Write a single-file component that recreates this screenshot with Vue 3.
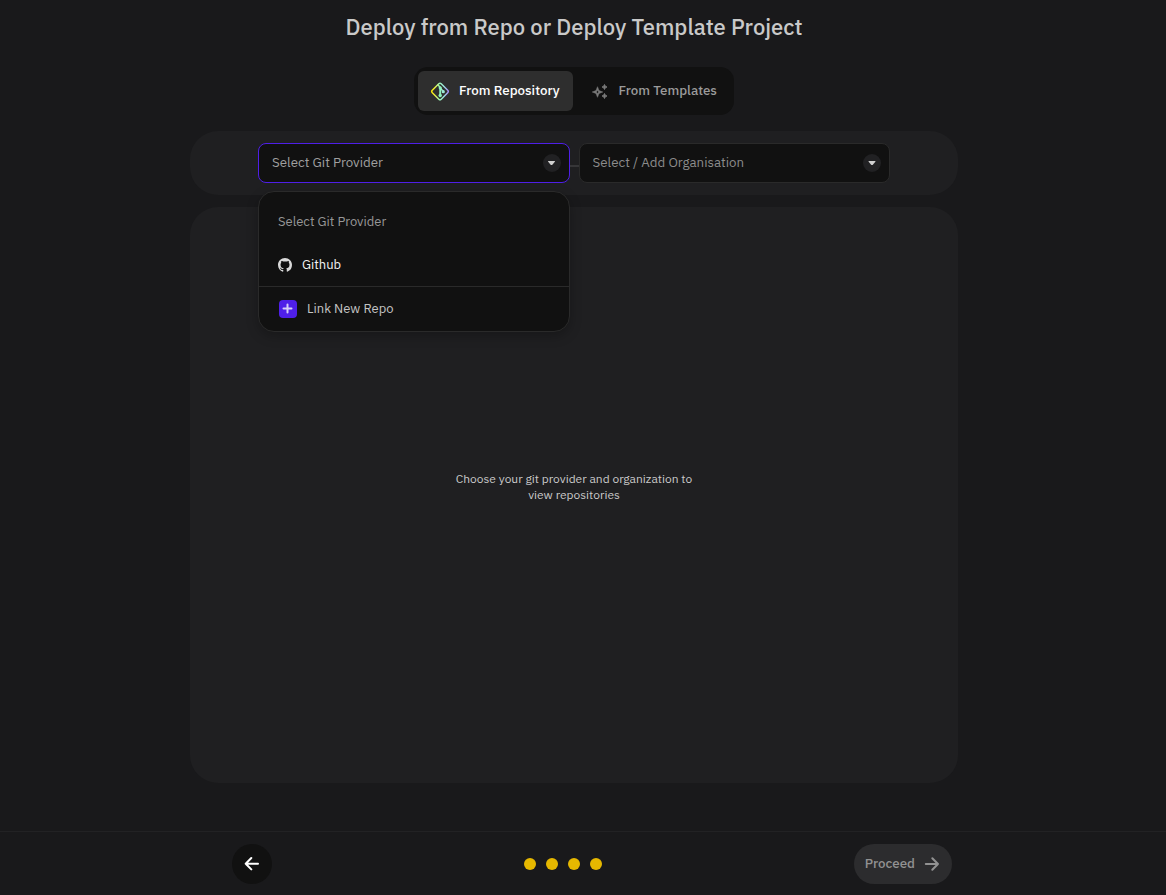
<script setup>
import { ref } from 'vue'

const source = ref('repository')
const provider = ref('')
const organisation = ref('')
const menuOpen = ref(true)
const steps = 4

function chooseProvider(name) {
  provider.value = name
  menuOpen.value = false
}
</script>

<template>
  <div class="page">
    <main class="content">
      <h1 class="title">Deploy from Repo or Deploy Template Project</h1>

      <div class="tabs" role="tablist">
        <button class="tab" :class="{ active: source === 'repository' }" type="button" role="tab" :aria-selected="source === 'repository'" @click="source = 'repository'">
          <svg class="tab-icon" width="20" height="20" viewBox="0 0 20 20" fill="none" aria-hidden="true">
            <defs>
              <linearGradient id="gitGradient" x1="1" y1="10" x2="19" y2="10" gradientUnits="userSpaceOnUse">
                <stop offset="0" stop-color="#ffe600" />
                <stop offset="0.22" stop-color="#e8ee3c" />
                <stop offset="0.45" stop-color="#9df5b4" />
                <stop offset="0.7" stop-color="#9be6dc" />
                <stop offset="1" stop-color="#a685ff" />
              </linearGradient>
            </defs>
            <g stroke="url(#gitGradient)" stroke-width="1.5" stroke-linejoin="round" stroke-linecap="round">
              <path d="M8.8 2.8 2.3 9.3a1.7 1.7 0 0 0 0 2.4l6.5 6.5a1.7 1.7 0 0 0 2.4 0l6.5-6.5a1.7 1.7 0 0 0 0-2.4l-6.5-6.5a1.7 1.7 0 0 0-2.4 0z" />
              <path d="M8 3.900 10 6M10.400 7 13 10.300" />
            </g>
            <path d="M10.200 6V14.500" stroke="#8ff3bd" stroke-width="1.900" />
            <circle cx="10.200" cy="6.800" r="1.600" fill="#8ff3bd" />
            <circle cx="10.200" cy="14.500" r="1.700" fill="#8ff3bd" />
            <circle cx="13.300" cy="10.700" r="1.600" fill="#9be9d5" />
          </svg>
          <span>From Repository</span>
        </button>
        <button class="tab" :class="{ active: source === 'templates' }" type="button" role="tab" :aria-selected="source === 'templates'" @click="source = 'templates'">
          <svg class="tab-icon" width="20" height="20" viewBox="0 0 20 20" fill="#7b7b7b" aria-hidden="true">
            <path fill-rule="evenodd" d="M7.500 5.700 9 9.500l3.800 1.500L9 12.500l-1.500 3.800L6 12.500l-3.800-1.500L6 9.500zM7.500 9.200 6.900 10.400l-1.200.6 1.200.6.6 1.200.6-1.200 1.200-.6-1.200-.6z" stroke="#7b7b7b" stroke-width=".5" />
            <path d="m14.500 3.500.8 1.700 1.700.8-1.700.8-.8 1.700-.8-1.700-1.700-.8 1.700-.8zM14.500 12.500l.8 1.700 1.700.8-1.700.8-.8 1.700-.8-1.700-1.700-.8 1.700-.8z" stroke="#7b7b7b" stroke-width=".9" />
          </svg>
          <span>From Templates</span>
        </button>
      </div>

      <section class="selectors">
        <div class="field">
          <select v-model="provider" class="select focused" aria-label="Git provider" @mousedown.prevent="menuOpen = !menuOpen">
            <option value="" disabled>Select Git Provider</option>
            <option value="github">Github</option>
          </select>
          <span class="chevron" aria-hidden="true"></span>

          <div v-if="menuOpen" class="menu">
            <p class="menu-heading">Select Git Provider</p>
            <button class="menu-item" type="button" @click="chooseProvider('github')">
              <svg width="14" height="14" viewBox="0 0 16 16" fill="#d9d9d9" aria-hidden="true">
                <path d="M8 0C3.580 0 0 3.580 0 8c0 3.540 2.290 6.530 5.470 7.590.4.070.55-.17.55-.38 0-.19-.01-.82-.01-1.490-2.010.37-2.530-.49-2.690-.94-.09-.23-.48-.94-.82-1.130-.28-.15-.68-.52-.01-.53.63-.01 1.080.58 1.230.82.72 1.210 1.870.87 2.330.66.070-.52.28-.87.51-1.070-1.780-.2-3.640-.89-3.640-3.950 0-.87.31-1.590.82-2.150-.08-.2-.36-1.020.08-2.120 0 0 .67-.21 2.200.82.64-.18 1.320-.27 2-.27s1.360.09 2 .27c1.530-1.040 2.200-.82 2.200-.82.44 1.100.16 1.920.08 2.120.51.56.82 1.270.82 2.150 0 3.070-1.870 3.750-3.650 3.950.29.25.54.73.54 1.480 0 1.070-.01 1.930-.01 2.200 0 .21.15.46.55.38A8.010 8.010 0 0 0 16 8c0-4.420-3.580-8-8-8z" />
              </svg>
              <span>Github</span>
            </button>
            <button class="menu-item link-new" type="button">
              <span class="plus">
                <svg width="18" height="18" viewBox="0 0 18 18" stroke="#d6cdf8" stroke-width="2" stroke-linecap="round" aria-hidden="true">
                  <path d="M8.500 4.500v8M4.500 8.500h8" />
                </svg>
              </span>
              <span>Link New Repo</span>
            </button>
          </div>
        </div>
        <span class="connector" aria-hidden="true"></span>
        <div class="field muted">
          <select v-model="organisation" class="select" aria-label="Organisation">
            <option value="" disabled>Select / Add Organisation</option>
          </select>
          <span class="chevron" aria-hidden="true"></span>
        </div>
      </section>

      <section class="repositories">
        <p class="hint">Choose your git provider and organization to view repositories</p>
      </section>
    </main>

    <footer class="footer">
      <div class="footer-inner">
        <button class="back" type="button" aria-label="Back">
          <svg width="16" height="16" viewBox="0 0 16 16" fill="none" stroke="#fff" stroke-width="2" stroke-linecap="round" stroke-linejoin="round" aria-hidden="true">
            <path d="M14 7.700H1.700M7.300 2 1.700 7.700l5.600 5.700" />
          </svg>
        </button>
        <div class="steps">
          <span v-for="n in steps" :key="n" class="step"></span>
        </div>
        <button class="proceed" type="button">
          <span>Proceed</span>
          <svg width="16" height="16" viewBox="0 0 16 16" fill="none" stroke="currentColor" stroke-width="2" stroke-linecap="round" stroke-linejoin="round" aria-hidden="true">
            <path d="M1.800 8H14M8.300 2.200 14 8l-5.700 5.800" />
          </svg>
        </button>
      </div>
    </footer>
  </div>
</template>

<style>
body {
  background: #19191b;
}
</style>

<style scoped>
.page {
  display: flex;
  flex-direction: column;
  box-sizing: border-box;
  min-height: 100vh;
  background: #19191b;
  color: #c9c9c9;
  font-family: "IBM Plex Sans", Roboto, "Noto Sans", sans-serif;
  font-size: 13px;
  line-height: 20px;
}

button,
select {
  margin: 0;
  border: 0;
  font-family: inherit;
  line-height: inherit;
  color: inherit;
  cursor: pointer;
}

.content {
  display: flex;
  flex: 1;
  flex-direction: column;
  align-items: center;
  padding: 11px 18px 48px 0;
}

.title {
  margin: 0 0 24px;
  font-size: 22px;
  font-weight: 500;
  line-height: 32px;
}

.tabs {
  display: flex;
  gap: 5px;
  margin-bottom: 16px;
  padding: 4px;
  border-radius: 14px;
  background: #111;
}

.tab {
  display: flex;
  align-items: center;
  gap: 9px;
  height: 40px;
  padding: 0 13px 0 12px;
  border-radius: 6px;
  background: transparent;
  color: #9b9b9b;
  font-weight: 500;
}

.tab span,
.proceed span {
  padding-bottom: 2px;
}

.tab.active {
  background: #2e2e2e;
  color: #fff;
}

.selectors {
  display: flex;
  align-items: center;
  box-sizing: border-box;
  width: 100%;
  max-width: 768px;
  margin-bottom: 12px;
  padding: 12px 68px;
  border-radius: 28px;
  background: #1f1f21;
}

.field {
  position: relative;
  flex: 1;
}

.select {
  display: block;
  box-sizing: border-box;
  width: 100%;
  height: 40px;
  padding: 0 40px 2px 13px;
  border: 1px solid #2a2a2a;
  border-radius: 8px;
  outline: none;
  appearance: none;
  background: #111;
  color: #a0a0a0;
}

.select.focused {
  border-color: #4f1fe8;
}

.muted .select {
  color: #8c8c8c;
}

.chevron {
  position: absolute;
  top: 11px;
  right: 9px;
  display: flex;
  align-items: center;
  justify-content: center;
  width: 18px;
  height: 18px;
  border-radius: 50%;
  background: #212123;
  pointer-events: none;
}

.chevron::before {
  width: 8px;
  height: 4px;
  background: #d0d0d0;
  clip-path: polygon(8% 0, 92% 0, 92% 20%, 58% 100%, 42% 100%, 8% 20%);
  content: "";
}

.connector {
  width: 9px;
  height: 2px;
  margin-top: 5px;
  background: #363638;
}

.menu {
  position: absolute;
  z-index: 2;
  top: 48px;
  left: 0;
  box-sizing: border-box;
  width: 100%;
  border: 1px solid #2a2a2a;
  border-radius: 16px;
  background: #111;
  box-shadow: 0 4px 12px rgba(0, 0, 0, 0.25);
  overflow: hidden;
}

.menu-heading {
  margin: 0;
  padding: 20px 19px 11px;
  color: #979797;
}

.menu-item {
  display: flex;
  align-items: center;
  gap: 10px;
  box-sizing: border-box;
  width: 100%;
  height: 43px;
  padding: 0 19px;
  background: transparent;
  color: #f4f4f4;
  font-size: 13px;
}

.menu-item.link-new {
  height: 45px;
  padding: 0 20px;
  border-top: 1px solid #2a2a2a;
  color: #c4c4c4;
}

.plus {
  display: flex;
  border-radius: 4px;
  background: #4f1fe8;
}

.repositories {
  display: flex;
  flex: 1;
  align-items: center;
  justify-content: center;
  box-sizing: border-box;
  width: 100%;
  max-width: 768px;
  padding: 0 24px 16px;
  border-radius: 28px;
  background: #1f1f21;
}

.hint {
  max-width: 256px;
  margin: 0;
  font-size: 12px;
  line-height: 16px;
  text-align: center;
}

.footer {
  border-top: 1px solid #222224;
  padding: 12px 18px 11px 0;
}

.footer-inner {
  display: flex;
  align-items: center;
  justify-content: space-between;
  box-sizing: border-box;
  width: 100%;
  max-width: 768px;
  margin: 0 auto;
  padding: 0 6px 0 42px;
}

.back {
  display: flex;
  align-items: center;
  justify-content: center;
  width: 40px;
  height: 40px;
  padding: 0;
  border-radius: 50%;
  background: #111;
}

.steps {
  display: flex;
  gap: 10px;
}

.step {
  width: 12px;
  height: 12px;
  border-radius: 50%;
  background: #e6b800;
}

.proceed {
  display: flex;
  align-items: center;
  gap: 9px;
  height: 40px;
  padding: 0 12px 0 11px;
  border-radius: 20px;
  background: #2c2c2e;
  color: #929292;
  font-weight: 500;
}
</style>
